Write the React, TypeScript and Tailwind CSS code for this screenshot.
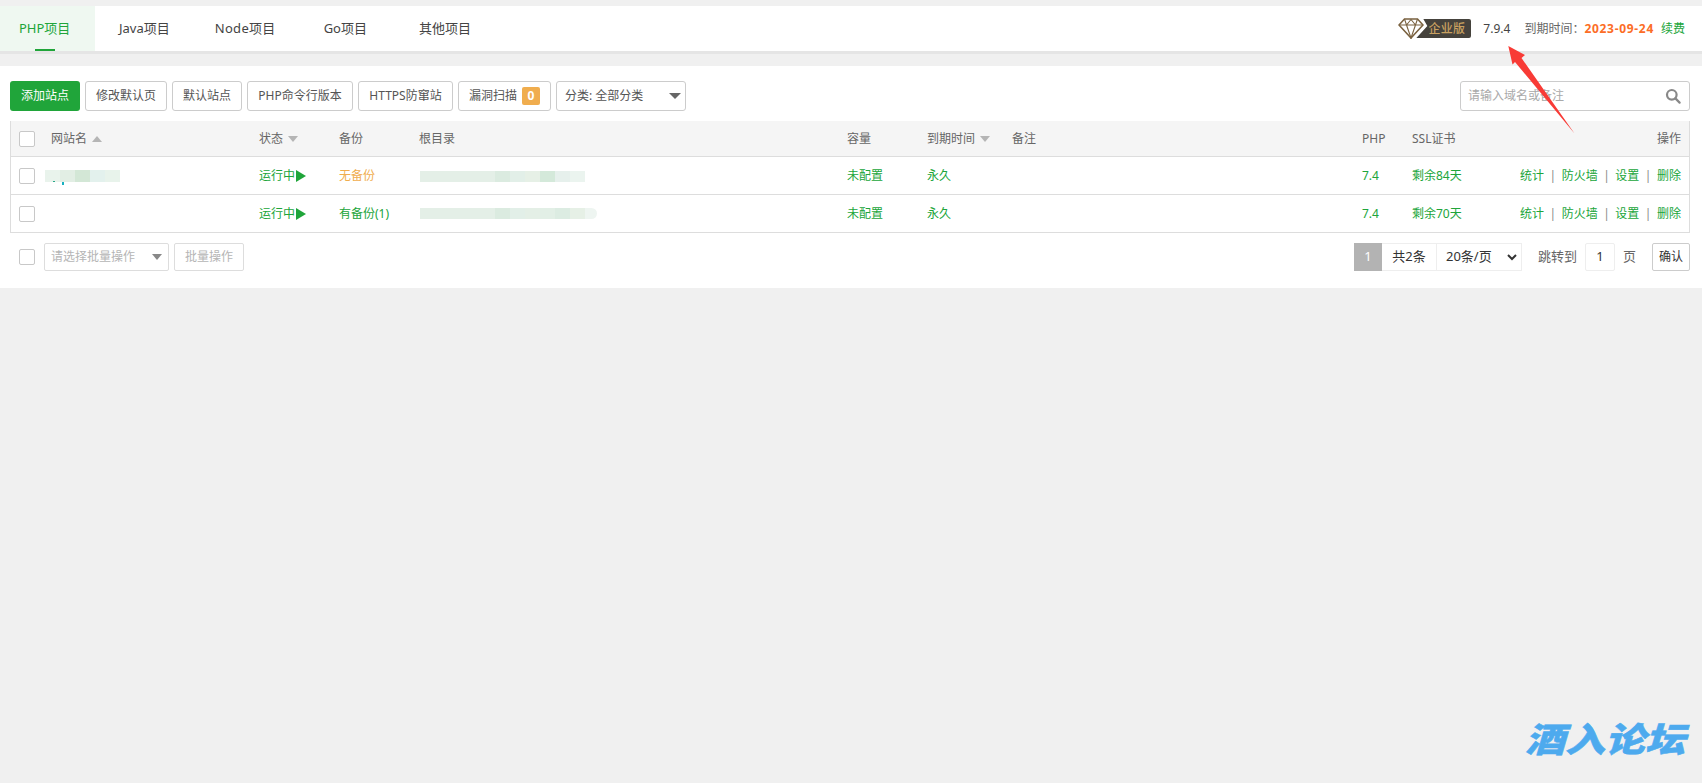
import React from "react";

const font = { fontFamily: '"Noto Sans", "Noto Sans CJK SC", sans-serif' };
const rowGrid =
  "grid grid-cols-[40px_208px_80px_81px_427px_80px_85px_350px_50px_1fr] items-center";

function Caret({ up, color = "#b5b5b5", big }: { up?: boolean; color?: string; big?: boolean }) {
  if (big) {
    return <span className="inline-block w-0 h-0 border-x-[6.5px] border-x-transparent border-t-[6px]" style={{ borderTopColor: color }} />;
  }
  return (
    <span
      className={
        "inline-block ml-[5px] w-0 h-0 border-x-[5px] border-x-transparent " +
        (up ? "border-b-[6px]" : "border-t-[6px]")
      }
      style={up ? { borderBottomColor: color } : { borderTopColor: color }}
    />
  );
}

function Check() {
  return <span className="block w-[16px] h-[16px] border border-[#c8c8c8] rounded-[2px] bg-white" />;
}

function Btn({ children, w }: { children: React.ReactNode; w: string }) {
  return (
    <div className={`${w} h-[30px] shrink-0 flex items-center justify-center border border-[#cccccc] rounded-[3px] bg-white text-[12px] text-[#555555]`}>
      {children}
    </div>
  );
}

function Blocks({ h, parts, last }: { h: string; parts: string[]; last?: string }) {
  return (
    <div className={`${h} flex`}>
      {parts.map((c, i) => (
        <span key={i} className="w-[15px]" style={{ backgroundColor: c }} />
      ))}
      {last ? <span className={`w-[12px] rounded-r-full`} style={{ backgroundColor: last }} /> : null}
    </div>
  );
}

function Ops() {
  const sep = <span className="text-[#8a8a8a] mx-[5.5px]">|</span>;
  return (
    <div className="flex justify-end text-[#20a53a] text-[12px] pr-[8px]">
      <span>统计</span>{sep}<span>防火墙</span>{sep}<span>设置</span>{sep}<span>删除</span>
    </div>
  );
}

function Row({ backup, backupCls, ssl, name, root }: { backup: string; backupCls: string; ssl: string; name: React.ReactNode; root: React.ReactNode }) {
  return (
    <div className={`${rowGrid} h-[38px] border-b border-[#dddddd] text-[12px] text-[#20a53a]`}>
      <div className="pl-[8px]"><Check /></div>
      <div className="-ml-[6px]">{name}</div>
      <div className="flex items-center">
        运行中
        <span className="inline-block ml-[1px] w-0 h-0 border-y-[6px] border-y-transparent border-l-[10px] border-l-[#20a53a]" />
      </div>
      <div className={backupCls}>{backup}</div>
      <div>{root}</div>
      <div>未配置</div>
      <div>永久</div>
      <div />
      <div>7.4</div>
      <div className="flex justify-between">
        <span>{ssl}</span>
        <Ops />
      </div>
    </div>
  );
}

export default function App() {
  return (
    <div className="relative min-h-[783px] h-[783px] overflow-hidden bg-[#f0f0f0] pt-[6px]" style={font}>
      {/* top nav */}
      <div className="h-[45px] bg-white flex items-stretch justify-between shadow-[0_3px_0_#e5e5e5]">
        <div className="flex items-stretch text-[13px] text-[#444444]">
          <div className="relative w-[95px] bg-[#eff8f1] text-[#20a53a] flex items-center pl-[19px]">
            PHP项目
            <span className="absolute left-[35px] bottom-0 w-[20px] h-[2px] bg-[#20a53a]" />
          </div>
          <div className="flex items-center ml-[24px]">Java项目</div>
          <div className="flex items-center ml-[45px] tracking-[0.3px]">Node项目</div>
          <div className="flex items-center ml-[48px]">Go项目</div>
          <div className="flex items-center ml-[52px]">其他项目</div>
        </div>
        <div className="flex items-center pr-[17px] text-[12px]">
          <svg width="26" height="21" viewBox="0 0 26 21" fill="none" stroke="#7a6240" strokeWidth="1.6">
            <path d="M6.5 1 H19.5 L25 7 L13 20 L1 7 Z" />
            <path d="M1 7 H25 M8.5 7 L13 20 L17.5 7 M6.5 1 L8.5 7 L13 1.5 L17.5 7 L19.5 1" strokeWidth="1.1" />
          </svg>
          <div className="-ml-[8px] h-[19px] w-[55px] bg-[#45423c] rounded-r-[2px] flex items-center justify-end pr-[6px] text-[12px] font-medium tracking-[0.3px] text-[#c8a060] [clip-path:polygon(7px_0,100%_0,100%_100%,0_100%,11px_7px)]">企业版</div>
          <span className="ml-[12px] text-[#444444]">7.9.4</span>
          <span className="ml-[14px] text-[#666666]">到期时间：</span>
          <span className="font-bold text-[#fc6d26] tracking-[0.7px]">2023-09-24</span>
          <span className="ml-[7px] text-[#20a53a]">续费</span>
        </div>
      </div>

      {/* panel */}
      <div className="mt-[15px] h-[222px] bg-white px-[10px] pr-[12px] pt-[15px]">
        <div className="flex justify-between h-[30px]">
          <div className="flex gap-[5px]">
            <div className="w-[70px] h-[30px] flex items-center justify-center rounded-[3px] bg-[#20a53a] text-white text-[12px]">添加站点</div>
            <Btn w="w-[82px]">修改默认页</Btn>
            <Btn w="w-[70px]">默认站点</Btn>
            <Btn w="w-[106px]">PHP命令行版本</Btn>
            <Btn w="w-[95px]">HTTPS防窜站</Btn>
            <Btn w="w-[93px]">
              漏洞扫描
              <span className="ml-[5px] w-[18px] h-[18px] rounded-[2px] bg-[#f0ad4e] text-white font-bold flex items-center justify-center text-[12px]">0</span>
            </Btn>
            <div className="w-[130px] h-[30px] flex items-center justify-between border border-[#cccccc] rounded-[3px] pl-[8px] pr-[4px] text-[12px] text-[#555555]">
              <span>分类: 全部分类</span>
              <Caret big color="#666666" />
            </div>
          </div>
          <div className="w-[230px] h-[30px] border border-[#cccccc] rounded-[3px] flex items-center justify-between pl-[7px] pr-[8px] text-[12px] text-[#a9a9a9]">
            <span>请输入域名或备注</span>
            <svg width="16" height="16" viewBox="0 0 16 16" fill="none" stroke="#888888" strokeWidth="2.2">
              <circle cx="6.8" cy="6.8" r="4.8" />
              <path d="M10.4 10.4 L14.6 14.6" strokeLinecap="round" />
            </svg>
          </div>
        </div>

        <div className="mt-[10px] border-x border-[#dddddd] border-b">
          <div className={`${rowGrid} h-[36px] bg-[#f5f5f5] border-b border-[#dddddd] text-[12px] text-[#666666]`}>
            <div className="pl-[8px]"><Check /></div>
            <div className="flex items-center">网站名<Caret up /></div>
            <div className="flex items-center">状态<Caret /></div>
            <div>备份</div>
            <div className="-ml-[1px]">根目录</div>
            <div>容量</div>
            <div className="flex items-center">到期时间<Caret /></div>
            <div>备注</div>
            <div>PHP</div>
            <div className="flex justify-between pr-[8px]"><span>SSL证书</span><span>操作</span></div>
          </div>
          <Row
            backup="无备份"
            backupCls="text-[#f0ad4e]"
            ssl="剩余84天"
            name={
              <div className="relative">
                <Blocks h="h-[12px]" parts={["#e9f3ec", "#e2eee4", "#d3e7d6", "#e3f1ed", "#e8f3eb"]} />
                <span className="absolute left-[8px] top-[11px] w-[2px] h-[1px] bg-[#2aa88a]" />
                <span className="absolute left-[17px] top-[12px] w-[2px] h-[3px] bg-[#18b0c0]" />
              </div>
            }
            root={
              <div className="pt-[1px]">
                <Blocks h="h-[11px]" parts={["#e4efe7", "#e4efe7", "#e4efe7", "#e4efe7", "#e4efe7", "#dbebe0", "#e2efe8", "#e6f0e6", "#d4e9da", "#e6f0ec", "#ebf4ef"]} />
              </div>
            }
          />
          <div className="-mb-[1px]">
            <Row
              backup="有备份(1)"
              backupCls=""
              ssl="剩余70天"
              name={null}
              root={
                <Blocks h="h-[11px]" parts={["#e4efe7", "#e4efe7", "#e4efe7", "#e4efe7", "#e4efe7", "#dbebe0", "#e2efe8", "#e4efe6", "#e2efe6", "#dcece2", "#e6f0e6"]} last="#eef5f1" />
              }
            />
          </div>
        </div>

        <div className="mt-[10px] flex justify-between items-center h-[28px]">
          <div className="flex items-center pl-[9px]">
            <Check />
            <div className="ml-[9px] w-[125px] h-[28px] border border-[#dddddd] rounded-[2px] flex items-center justify-between pl-[6px] pr-[6px] text-[12px] text-[#b5b5b5]">
              <span>请选择批量操作</span>
              <Caret color="#888888" />
            </div>
            <div className="ml-[5px] w-[70px] h-[28px] border border-[#dddddd] rounded-[2px] flex items-center justify-center text-[12px] text-[#b5b5b5]">批量操作</div>
          </div>
          <div className="flex items-center text-[13px] text-[#555555]">
            <div className="w-[28px] h-[28px] bg-[#b3b3b3] text-white flex items-center justify-center">1</div>
            <div className="w-[55px] h-[28px] border-y border-r border-[#eeeeee] flex items-center justify-center text-[#333333]">共2条</div>
            <div className="w-[85px] h-[28px] border-y border-r border-[#eeeeee] flex items-center justify-between pl-[9px] pr-[4px] text-[#333333]">
              <span>20条/页</span>
              <svg width="10" height="7" viewBox="0 0 10 7" fill="none" stroke="#333333" strokeWidth="2"><path d="M1 1 L5 5 L9 1" /></svg>
            </div>
            <span className="ml-[16px] text-[#666666]">跳转到</span>
            <div className="ml-[8px] w-[30px] h-[28px] border border-[#eeeeee] rounded-[2px] flex items-center justify-center text-[#333333]">1</div>
            <span className="ml-[8px] text-[#666666]">页</span>
            <div className="ml-[16px] w-[38px] h-[28px] border border-[#cccccc] rounded-[2px] flex items-center justify-center text-[12px] text-[#333333]">确认</div>
          </div>
        </div>
      </div>

      {/* annotation arrow */}
      <svg className="absolute left-[1500px] top-[40px]" width="85" height="100" viewBox="0 0 85 100">
        <path d="M8.3 6 L25 15 L21.5 18 L74.5 93.5 L15 22 L12.5 24.5 Z" fill="#f83b36" />
      </svg>

      {/* watermark */}
      <div
        className="absolute left-[1525px] top-[721px] text-[40px] leading-[40px] font-black italic text-[#4daaee] whitespace-nowrap scale-y-[0.85] origin-top [-webkit-text-stroke:0.6px_#4daaee]"
        style={{ fontFamily: '"Noto Sans CJK SC", sans-serif' }}
      >
        酒入论坛
      </div>
    </div>
  );
}
